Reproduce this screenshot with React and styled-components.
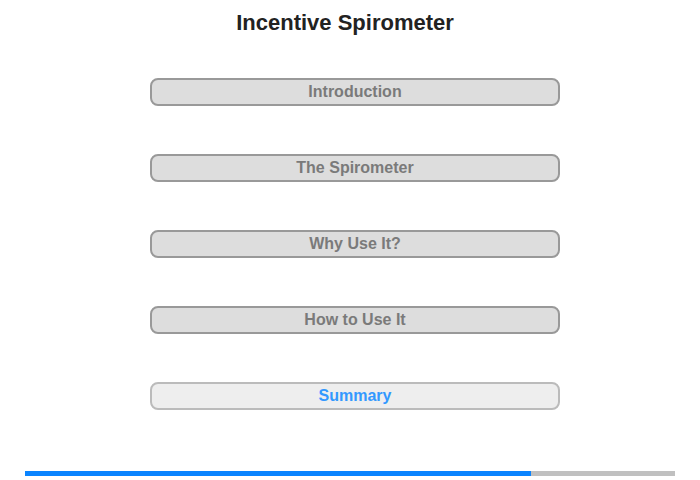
import React from "react";
import styled, { createGlobalStyle } from "styled-components";

const Global = createGlobalStyle`
  html, body { margin: 0; padding: 0; background: #fff; }
  body { font-family: "Liberation Sans", Arial, sans-serif; }
`;

const Page = styled.div`
  width: 700px;
  height: 480px;
  display: flex;
  flex-direction: column;
  align-items: center;
  box-sizing: border-box;
  padding-top: 11px;
`;

const Title = styled.h1`
  margin: 0 10px 0 0;
  font-size: 22px;
  line-height: 24px;
  font-weight: bold;
  color: #222;
`;

const Menu = styled.div`
  margin: 43px 0 0 10px;
  display: flex;
  flex-direction: column;
  gap: 48px;
`;

const MenuButton = styled.button`
  box-sizing: border-box;
  width: 410px;
  height: 28px;
  border-radius: 8px;
  border: 2px solid ${(p) => (p.$active ? "#bbb" : "#999")};
  background: ${(p) => (p.$active ? "#eee" : "#ddd")};
  color: ${(p) => (p.$active ? "#3399ff" : "#7a7a7a")};
  font-family: "Liberation Sans", Arial, sans-serif;
  font-weight: bold;
  font-size: 16px;
  padding: 0;
  cursor: pointer;
`;

const Progress = styled.div`
  margin-top: 61px;
  width: 650px;
  height: 5px;
  background: #c0c0c0;
  display: flex;
`;

const Fill = styled.div`
  height: 100%;
  background: #0a84ff;
`;

const items = ["Introduction", "The Spirometer", "Why Use It?", "How to Use It", "Summary"];

export default function App() {
  return (
    <>
      <Global />
      <Page>
        <Title>Incentive Spirometer</Title>
        <Menu>
          {items.map((t) => (
            <MenuButton key={t} $active={t === "Summary"}>
              {t}
            </MenuButton>
          ))}
        </Menu>
        <Progress>
          <Fill style={{ width: `${(506 / 650) * 100}%` }} />
        </Progress>
      </Page>
    </>
  );
}
